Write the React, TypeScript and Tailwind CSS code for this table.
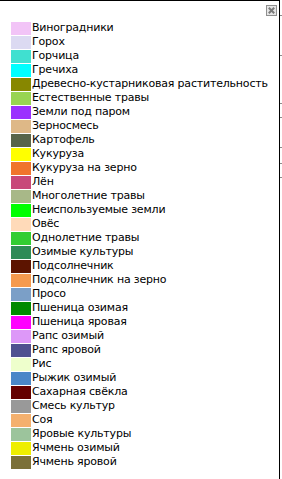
import React from "react";

type Entry = { label: string; color: string };

const entries: Entry[] = [
  { label: "Виноградники", color: "#f2c4f7" },
  { label: "Горох", color: "#dcdaf2" },
  { label: "Горчица", color: "#40e0d0" },
  { label: "Гречиха", color: "#00ffff" },
  { label: "Древесно-кустарниковая растительность", color: "#878700" },
  { label: "Естественные травы", color: "#98d452" },
  { label: "Земли под паром", color: "#9b30ff" },
  { label: "Зерносмесь", color: "#deb887" },
  { label: "Картофель", color: "#58654a" },
  { label: "Кукуруза", color: "#ffff00" },
  { label: "Кукуруза на зерно", color: "#f0742c" },
  { label: "Лён", color: "#c8487a" },
  { label: "Многолетние травы", color: "#a8b888" },
  { label: "Неиспользуемые земли", color: "#00ff00" },
  { label: "Овёс", color: "#ffdab9" },
  { label: "Однолетние травы", color: "#32cd32" },
  { label: "Озимые культуры", color: "#2e8b57" },
  { label: "Подсолнечник", color: "#5c1400" },
  { label: "Подсолнечник на зерно", color: "#f59a4e" },
  { label: "Просо", color: "#7b9fc7" },
  { label: "Пшеница озимая", color: "#008a00" },
  { label: "Пшеница яровая", color: "#ff00ff" },
  { label: "Рапс озимый", color: "#dd98f8" },
  { label: "Рапс яровой", color: "#4f5190" },
  { label: "Рис", color: "#eeffcc" },
  { label: "Рыжик озимый", color: "#4a87c8" },
  { label: "Сахарная свёкла", color: "#640000" },
  { label: "Смесь культур", color: "#999999" },
  { label: "Соя", color: "#f4b06e" },
  { label: "Яровые культуры", color: "#9cc49c" },
  { label: "Ячмень озимый", color: "#eeee00" },
  { label: "Ячмень яровой", color: "#7b7038" },
];

const ticks = [15, 55, 103, 117, 147, 163, 177];

function CloseIcon() {
  return (
    <svg width="11" height="11" viewBox="0 0 11 11">
      <rect x="0.5" y="0.5" width="10" height="10" fill="#e6e6e6" stroke="#8f8f8f" />
      <path d="M2.8 2.8 L8.2 8.2 M8.2 2.8 L2.8 8.2" stroke="#7a7a7a" strokeWidth="2" />
    </svg>
  );
}

export default function App() {
  return (
    <div className="w-[282px] h-[479px] bg-white flex overflow-hidden">
      <div
        className="w-[280px] h-full border-t border-r border-black flex flex-col"
        style={{ fontFamily: '"DejaVu Sans", Verdana, sans-serif' }}
      >
        <div className="flex justify-end pt-[4px] pr-[2px]">
          <button className="w-[11px] h-[11px] flex">
            <CloseIcon />
          </button>
        </div>
        <ul className="flex flex-col pl-[11px] pt-[5px]">
          {entries.map((e) => (
            <li key={e.label} className="h-[14px] flex items-center gap-[1px]">
              <span className="w-[20px] h-[13px] shrink-0" style={{ backgroundColor: e.color }} />
              <span className="text-[11px] leading-[14px] tracking-[-0.19px] text-black whitespace-nowrap">
                {e.label}
              </span>
            </li>
          ))}
        </ul>
      </div>
      <div className="w-[2px] h-full relative">
        {ticks.map((t) => (
          <span key={t} className="absolute right-0 w-[2px] h-[1px] bg-[#8c8c8c]" style={{ top: t }} />
        ))}
      </div>
    </div>
  );
}
